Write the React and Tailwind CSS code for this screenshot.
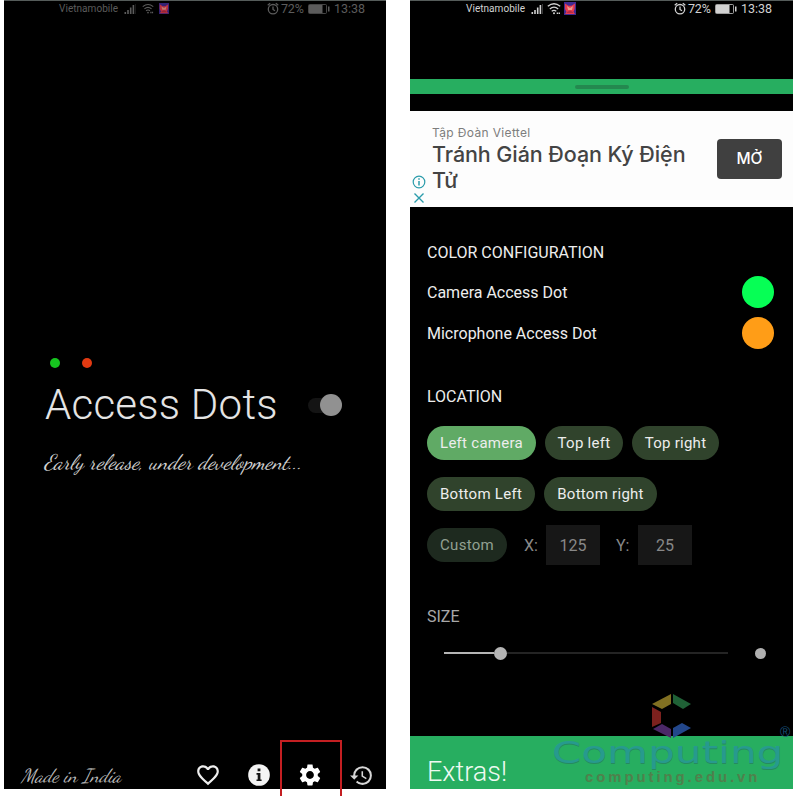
import React from "react";

const ROBOTO = "font-['Roboto','Liberation_Sans',sans-serif]";
const SCRIPT = "italic font-['Dancing_Script','Liberation_Serif',cursive]";

function Signal() {
  return (
    <svg className="block h-[12px] w-[12px]" viewBox="0 0 12 12" fill="currentColor">
      <rect x="0.5" y="9" width="1.6" height="2" />
      <rect x="3.2" y="7" width="1.6" height="4" />
      <rect x="5.9" y="4.5" width="1.6" height="6.5" />
      <rect x="8.6" y="2" width="1.6" height="9" />
      <rect x="11" y="1" width="0.8" height="10" opacity="0.35" />
    </svg>
  );
}

function Wifi() {
  return (
    <svg className="block h-[13px] w-[14px]" viewBox="0 0 14 13" fill="none" stroke="currentColor" strokeWidth="1.3">
      <path d="M0.8 4.3Q7 -0.8 13.2 4.3" />
      <path d="M2.8 6.9Q7 3.4 11.2 6.9" />
      <path d="M4.7 9.2Q7 7.4 9.3 9.2" />
      <circle cx="7" cy="11.3" r="1" fill="currentColor" stroke="none" />
      <path d="M9.7 11.2h3.3" strokeWidth="1.6" strokeDasharray="1.4 0.5" />
    </svg>
  );
}

function AppBadge() {
  return (
    <svg className="block h-[13px] w-[12px]" viewBox="0 0 12 13">
      <rect width="12" height="13" fill="#402a91" />
      <path d="M1 1.500l3.500 2.300h3L11 1.500l-.4 5.500L9.500 10 11 12H1l1.500-2L1 7z" fill="#e63b51" />
      <path d="M3 4l3 2 3-2-1 4H4z" fill="#ef9a8b" />
      <path d="M3 10l3-1.500L9 10v1H3z" fill="#b72d43" />
    </svg>
  );
}

function Alarm() {
  return (
    <svg className="block h-[13px] w-[12px]" viewBox="0 0 12 13" fill="none" stroke="currentColor" strokeWidth="1.3">
      <circle cx="6" cy="7.200" r="4.700" />
      <path d="M6 4.500v3l2 1.300M0.700 3.200l2.500-2M11.300 3.200l-2.500-2" />
    </svg>
  );
}

function Battery() {
  return (
    <svg className="block h-[10px] w-[22px]" viewBox="0 0 22 10">
      <rect x="0.500" y="0.500" width="18" height="9" rx="1" fill="none" stroke="currentColor" opacity="0.75" />
      <rect x="1" y="1" width="13.500" height="8" fill="currentColor" />
      <rect x="20" y="2.500" width="1.500" height="5" fill="currentColor" />
    </svg>
  );
}

function StatusBar({ dim }) {
  return (
    <div
      className={
        "flex h-[16px] shrink-0 items-center border-t border-[#555c5a] " +
        ROBOTO +
        (dim ? " pl-[55px] text-[#5c5c5c]" : " pl-[56px] text-[#d2d2d2]")
      }
    >
      <span className="w-[57px] whitespace-nowrap text-[10px] leading-[14px] tracking-[0.040px]">Vietnamobile</span>
      <div className="ml-[8px]"><Signal /></div>
      <div className={dim ? "ml-[5px] scale-[0.850]" : "ml-[4px]"}><Wifi /></div>
      <div className={dim ? "ml-[3px] scale-[0.85] opacity-80" : "ml-[3px]"}><AppBadge /></div>
      <div className={dim ? "ml-[97px]" : "ml-[98px]"}><Alarm /></div>
      <span className="ml-[2px] w-[25px] whitespace-nowrap text-[12.500px] leading-[14px] tracking-[-0.200px]">72%</span>
      <div className="ml-[2px]"><Battery /></div>
      <span className="ml-[4px] whitespace-nowrap text-[12.500px] leading-[14px]">13:38</span>
    </div>
  );
}

function HomePhone() {
  return (
    <section className="flex h-[789px] w-[382px] shrink-0 flex-col bg-black">
      <StatusBar dim />
      <div className="ml-[46px] mt-[342px] flex gap-[22px]">
        <div className="h-[10px] w-[10px] rounded-full bg-[#16c51f]" />
        <div className="h-[10px] w-[10px] rounded-full bg-[#e23a12]" />
      </div>
      <div className="ml-[41px] mt-[12px] flex h-[50px] items-center">
        <h1 className={"w-[263px] whitespace-nowrap text-[42px] font-light leading-[50px] tracking-[0.250px] text-[#e4e4e4] " + ROBOTO}>
          Access Dots
        </h1>
        <div className="flex h-[15px] w-[34px] items-center justify-end rounded-full bg-[#141414]">
          <div className="h-[22px] w-[22px] shrink-0 rounded-full bg-[#919191]" />
        </div>
      </div>
      <p className={"ml-[40px] mt-[16px] h-[32px] whitespace-nowrap text-[21.200px] leading-[32px] text-[#d0d0d0] " + SCRIPT}>
        Early release, under development...
      </p>
      <div className="mt-[283px] flex h-[28px] items-center">
        <span className={"ml-[17px] w-[174px] whitespace-nowrap pt-[2px] text-[19px] leading-[28px] text-[#bcbcbc] " + SCRIPT}>Made in India</span>
        <svg className="block h-[26px] w-[26px]" viewBox="0 0 24 24" fill="#eeeeee">
          <path d="M16.500 3c-1.740 0-3.410.810-4.500 2.090C10.910 3.810 9.240 3 7.500 3 4.420 3 2 5.420 2 8.500c0 3.780 3.400 6.860 8.550 11.540L12 21.350l1.450-1.320C18.600 15.360 22 12.280 22 8.500 22 5.420 19.580 3 16.500 3zm-4.400 15.550l-.1.100-.1-.1C7.140 14.240 4 11.390 4 8.500 4 6.500 5.500 5 7.500 5c1.540 0 3.040.990 3.570 2.360h1.870C13.460 5.990 14.960 5 16.500 5c2 0 3.500 1.500 3.500 3.500 0 2.890-3.140 5.740-7.900 10.050z" />
        </svg>
        <svg className="ml-[25px] block h-[26px] w-[26px]" viewBox="0 0 24 24">
          <circle cx="12" cy="12" r="10" fill="#f4f4f4" />
          <path d="M10.700 6h2.600v2.600h-2.600zM9.700 10.200h3.600v5.900h1.100v1.500H9.700v-1.500h1.100v-4.400H9.700z" fill="#171717" />
        </svg>
        <svg className="ml-[25px] block h-[26px] w-[26px]" viewBox="0 0 24 24" fill="#ffffff">
          <path d="M19.140 12.940c.040-.300.060-.610.060-.940 0-.320-.020-.640-.070-.940l2.030-1.580c.180-.140.230-.410.120-.610l-1.920-3.320c-.120-.220-.370-.290-.590-.220l-2.390.960c-.500-.380-1.030-.700-1.620-.940l-.360-2.540c-.040-.240-.240-.410-.480-.410h-3.840c-.240 0-.430.170-.470.410l-.360 2.540c-.590.240-1.130.570-1.620.940l-2.390-.960c-.220-.080-.470 0-.590.220L2.740 8.870c-.120.210-.080.470.120.610l2.030 1.580c-.050.300-.090.630-.090.940s.020.640.070.940l-2.030 1.580c-.180.140-.230.410-.120.610l1.920 3.320c.120.220.370.290.590.220l2.390-.960c.500.380 1.030.700 1.620.940l.360 2.540c.050.240.240.410.480.410h3.840c.240 0 .440-.170.470-.410l.360-2.540c.590-.240 1.130-.560 1.620-.940l2.390.960c.220.080.470 0 .590-.220l1.920-3.320c.120-.220.070-.470-.120-.610l-2.010-1.580zM12 15.600c-1.980 0-3.600-1.620-3.600-3.600s1.620-3.600 3.600-3.600 3.600 1.620 3.600 3.600-1.620 3.600-3.600 3.600z" />
        </svg>
        <svg className="ml-[26px] block h-[25px] w-[25px]" viewBox="0 0 24 24" fill="#d6d6d6">
          <path d="M13 3a9 9 0 0 0-9 9H1l3.890 3.890.070.140L9 12H6c0-3.870 3.130-7 7-7s7 3.130 7 7-3.130 7-7 7c-1.930 0-3.680-.790-4.940-2.060l-1.420 1.420A8.954 8.954 0 0 0 13 21a9 9 0 0 0 0-18zm-1 5v5l4.280 2.540.720-1.210-3.500-2.080V8H12z" />
        </svg>
      </div>
    </section>
  );
}

function Ad() {
  return (
    <div className="mt-[17px] flex h-[96px] shrink-0 bg-[#fdfdfd] font-['Inter','Noto_Sans',sans-serif]">
      <div className="flex w-[22px] flex-col items-end pr-[7px] pt-[64px] text-[#2b9cab]">
        <svg className="-mr-px block h-[14px] w-[14px] shrink-0" viewBox="0 0 14 14" fill="none" stroke="currentColor">
          <circle cx="7" cy="7" r="5.800" strokeWidth="1.200" />
          <path d="M7 6v4.500M7 3.300v1.500" strokeWidth="1.500" />
        </svg>
        <svg className="mt-[3px] block h-[12px] w-[12px] shrink-0" viewBox="0 0 12 12" fill="none" stroke="currentColor" strokeWidth="1.400">
          <path d="M1.500 1.500l9 9M10.500 1.500l-9 9" />
        </svg>
      </div>
      <div className="w-[285px] pt-[14px]">
        <p className="whitespace-nowrap text-[12px] leading-[16px] tracking-[0.350px] text-[#7d7d7d]">Tập Đoàn Viettel</p>
        <p className="whitespace-nowrap text-[21.500px] font-medium leading-[26px] tracking-[-0.080px] text-[#444444]">
          Tránh Gián Đoạn Ký Điện
          <br />
          Tử
        </p>
      </div>
      <button className="mt-[28px] h-[40px] w-[65px] rounded-[4px] bg-[#404040] text-[15.500px] font-medium text-white">MỞ</button>
    </div>
  );
}

function Chip({ className, children }) {
  return (
    <button className={"h-[34px] shrink-0 whitespace-nowrap rounded-full text-[15px] tracking-[0.270px] " + className}>
      {children}
    </button>
  );
}

function Watermark() {
  return (
    <div className="absolute left-[142px] top-[692px] h-[97px] w-[241px]">
      <svg className="absolute left-[99px] top-[1px] h-[46px] w-[42px]" viewBox="0 0 42 46">
        <path d="M20 1v10L11 16 1 11z" fill="#817022" />
        <path d="M22 1l18 10-8 5-10-6z" fill="#1f6136" />
        <path d="M1 14l9 5v11l-9 4z" fill="#7c211e" />
        <path d="M2 36l9-5 9 5v9z" fill="#4c2868" />
        <path d="M22 35l9-5 9 5-18 10z" fill="#23478b" />
      </svg>
      <div className="absolute left-0 top-[46px] origin-left scale-x-[1.350] whitespace-nowrap font-['DejaVu_Sans','Liberation_Sans',sans-serif] text-[31px] font-normal leading-[28px] tracking-[0.150px] text-[#279a8e] [text-shadow:0_1px_0_#258a60]">
        Computing
      </div>
      <div className="absolute left-[33px] top-[75px] origin-left scale-x-[0.990] whitespace-nowrap font-['Liberation_Sans',sans-serif] text-[15px] font-bold leading-[20px] tracking-[3px] text-[#50804c]">
        computing.edu.vn
      </div>
      <div className="absolute left-[228px] top-[34px] font-['Liberation_Sans',sans-serif] text-[14px] leading-[12px] text-[#174d74]">®</div>
    </div>
  );
}

function SettingsPhone() {
  return (
    <section className={"relative flex h-[789px] w-[383px] shrink-0 flex-col bg-black text-[#ededed] " + ROBOTO}>
      <StatusBar />
      <div className="mt-[63px] flex h-[15px] shrink-0 items-center justify-center bg-[#27ae60]">
        <div className="h-[4px] w-[54px] rounded-full bg-[#24884f]" />
      </div>
      <Ad />
      <h2 className="ml-[17px] mt-[36px] h-[20px] whitespace-nowrap text-[16px] leading-[20px]">COLOR CONFIGURATION</h2>
      <div className="ml-[17px] mr-[19px] mt-[13px] flex h-[32px] items-center justify-between">
        <span className="whitespace-nowrap pt-[2px] text-[16px]">Camera Access Dot</span>
        <div className="h-[32px] w-[32px] rounded-full bg-[#06ff55]" />
      </div>
      <div className="ml-[17px] mr-[19px] mt-[9px] flex h-[32px] items-center justify-between">
        <span className="whitespace-nowrap pt-[2px] text-[16px]">Microphone Access Dot</span>
        <div className="h-[32px] w-[32px] rounded-full bg-[#ff9d17]" />
      </div>
      <h2 className="ml-[17px] mt-[38px] h-[20px] whitespace-nowrap text-[16px] leading-[20px]">LOCATION</h2>
      <div className="ml-[17px] mt-[19px] flex">
        <Chip className="w-[109px] bg-[#60aa65]">Left camera</Chip>
        <Chip className="ml-[9px] w-[78px] bg-[#30432c]">Top left</Chip>
        <Chip className="ml-[9px] w-[87px] bg-[#30432c]">Top right</Chip>
      </div>
      <div className="ml-[17px] mt-[17px] flex">
        <Chip className="w-[108px] bg-[#30432c]">Bottom Left</Chip>
        <Chip className="ml-[9px] w-[113px] bg-[#30432c]">Bottom right</Chip>
      </div>
      <div className="ml-[17px] mt-[14px] flex h-[40px] items-center text-[16px] text-[#888888]">
        <Chip className="w-[80px] bg-[#1e2a1f] text-[#92a092]">Custom</Chip>
        <span className="ml-[17px] w-[22px] pt-[2px]">X:</span>
        <div className="flex h-[40px] w-[54px] items-center justify-center bg-[#171717] pt-[2px]">125</div>
        <span className="ml-[16px] w-[22px] pt-[2px]">Y:</span>
        <div className="flex h-[40px] w-[54px] items-center justify-center bg-[#171717] pt-[2px]">25</div>
      </div>
      <h2 className="ml-[17px] mt-[42px] h-[20px] text-[16px] leading-[20px] text-[#a8a8a8]">SIZE</h2>
      <div className="ml-[34px] mt-[19px] flex h-[14px] items-center">
        <div className="h-[2px] w-[50px] bg-[#b5b5b5]" />
        <div className="h-[13px] w-[13px] rounded-full bg-[#b5b5b5]" />
        <div className="h-[2px] w-[221px] bg-[#242424]" />
        <div className="ml-[27px] h-[11px] w-[11px] rounded-full bg-[#b0b0b0]" />
      </div>
      <div className="mt-[76px] h-[53px] shrink-0 bg-[#27ae60] pl-[17px] pt-[20px] text-[27px] leading-[32px] text-[#eefaf2]">
        <span className="font-light">Extras!</span>
      </div>
      <Watermark />
    </section>
  );
}

export default function App() {
  return (
    <main className="relative flex h-[796px] w-[800px] items-start gap-[24px] overflow-hidden bg-white pl-[4px]">
      <HomePhone />
      <SettingsPhone />
      <div className="absolute left-[280px] top-[740px] h-[60px] w-[62px] border-2 border-[#c41f22]" />
    </main>
  );
}
